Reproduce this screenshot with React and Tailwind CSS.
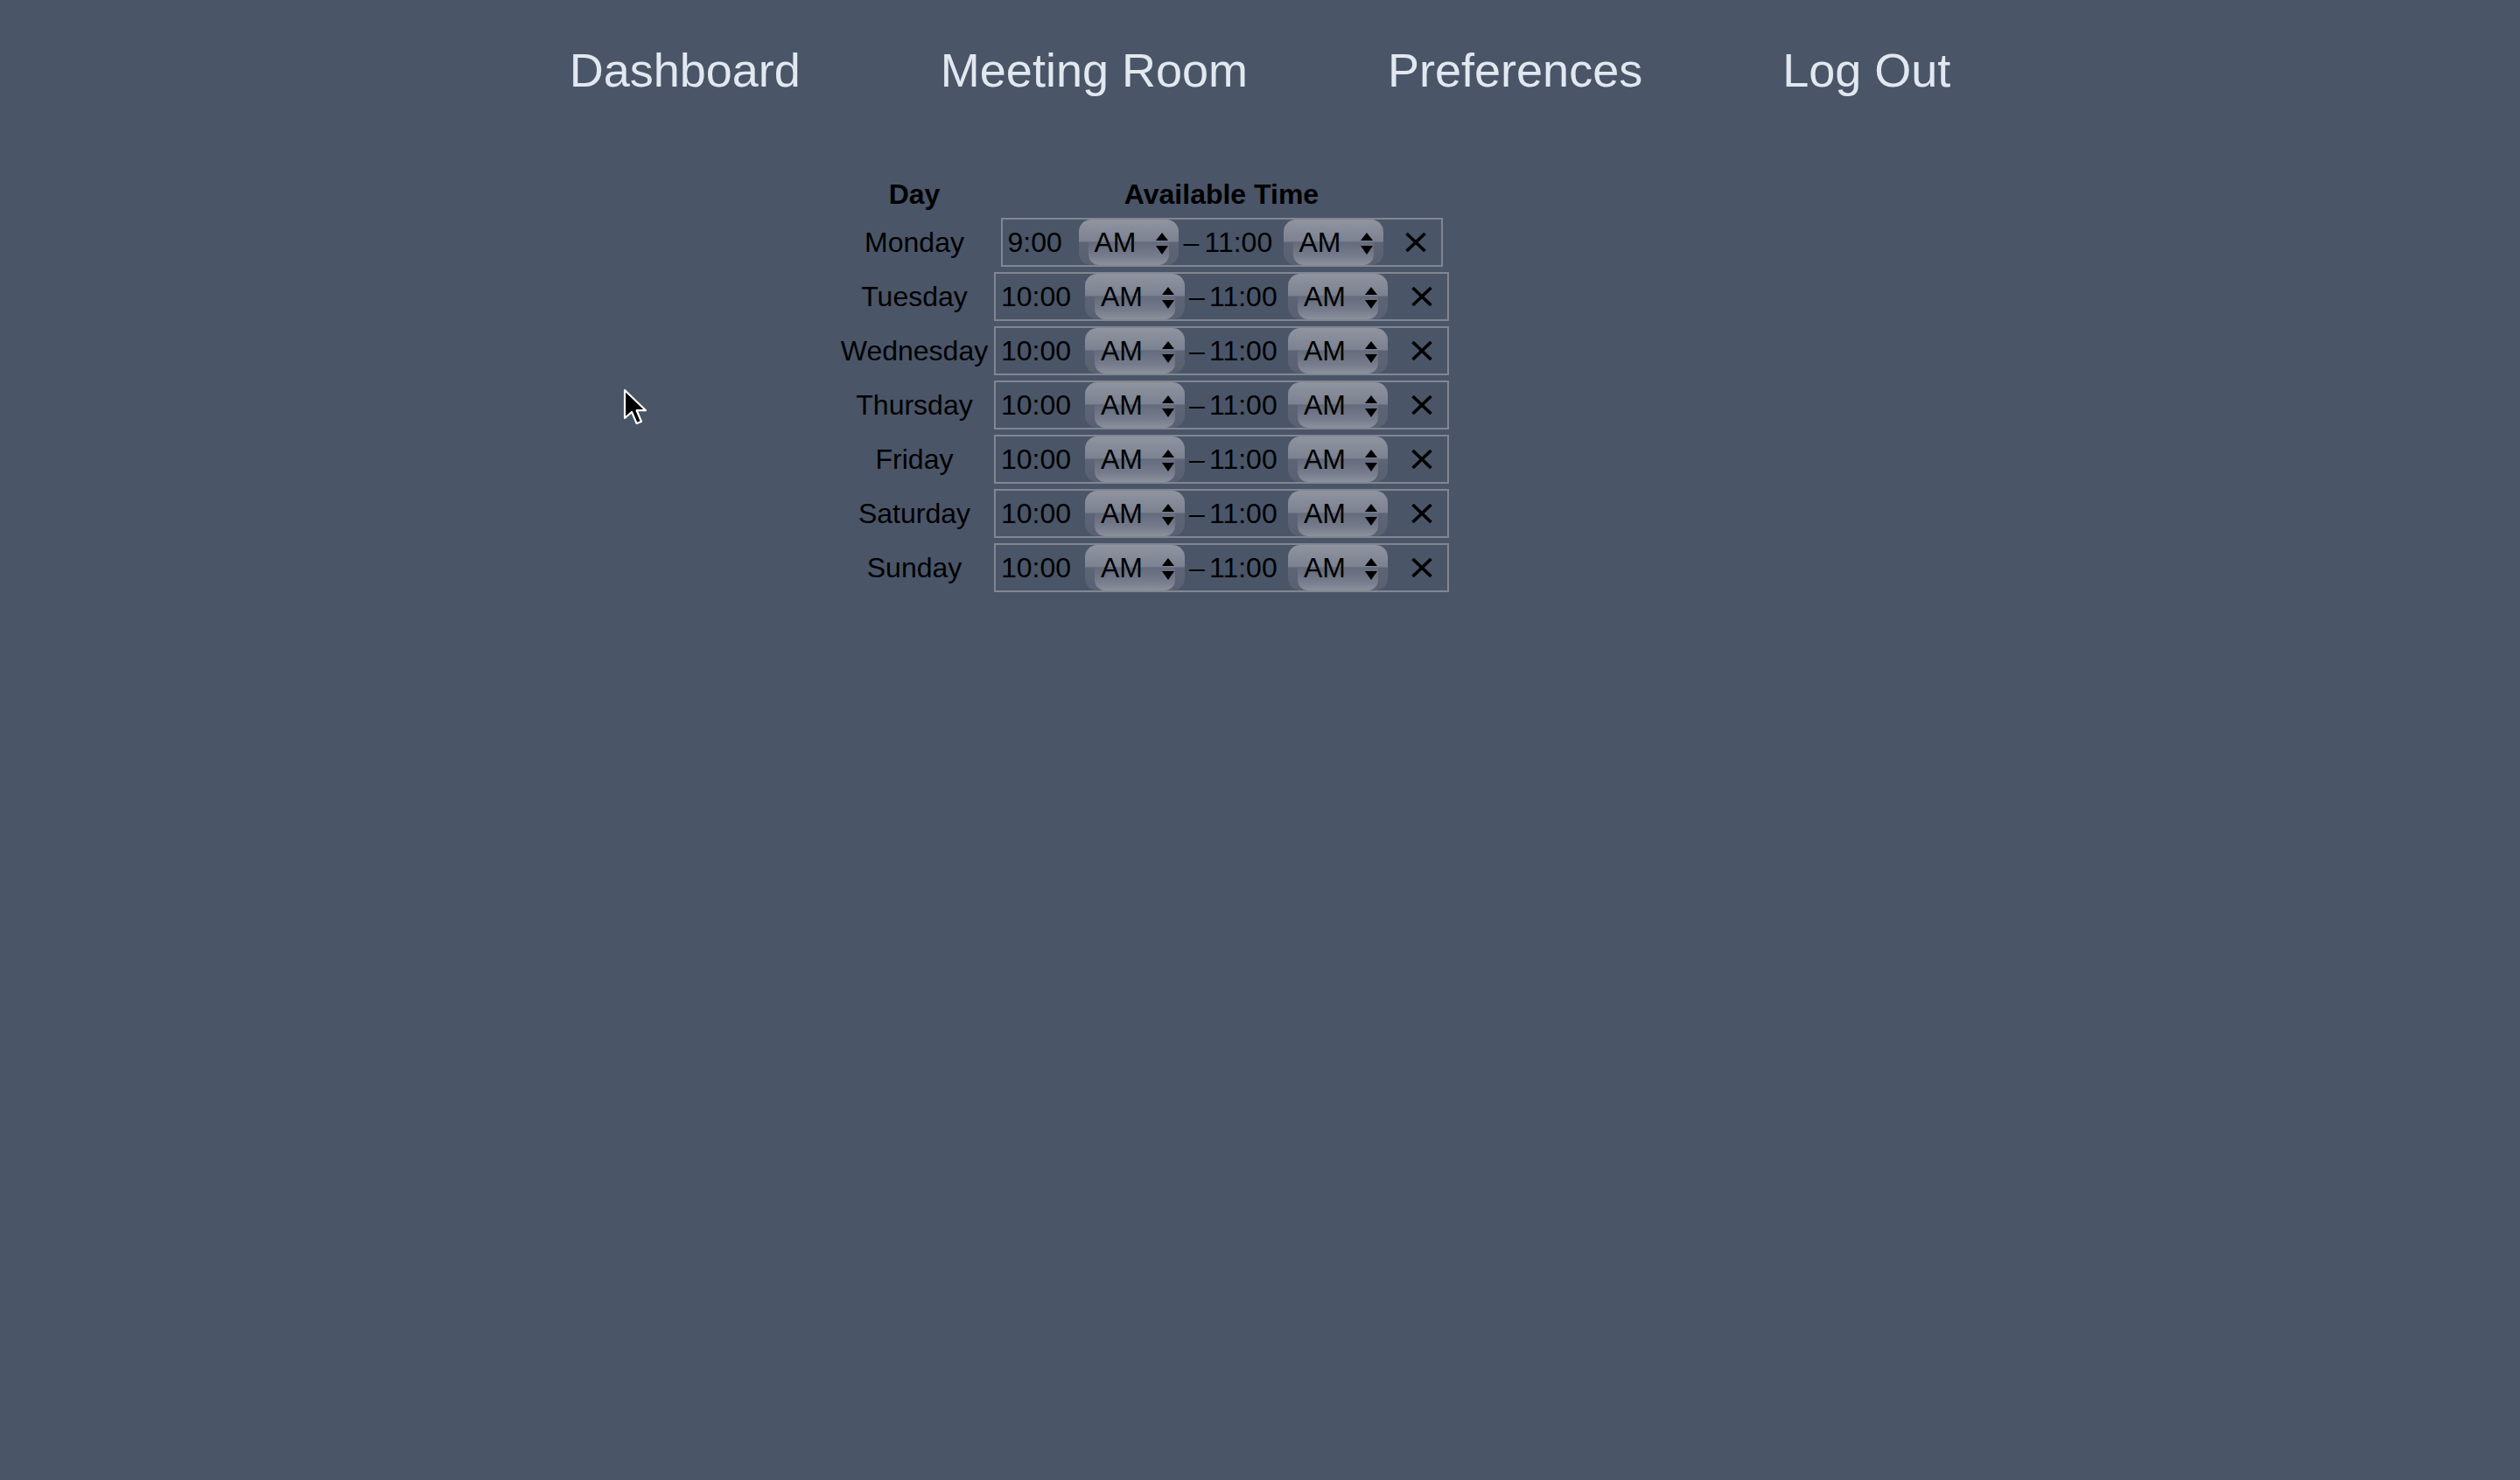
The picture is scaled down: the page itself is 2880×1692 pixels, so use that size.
import React from "react";

const rows = [
  ["Monday", "9:00"],
  ["Tuesday", "10:00"],
  ["Wednesday", "10:00"],
  ["Thursday", "10:00"],
  ["Friday", "10:00"],
  ["Saturday", "10:00"],
  ["Sunday", "10:00"],
];

function Arrows() {
  return (
    <svg width="14" height="26" viewBox="0 0 14 26" className="mt-[3px] shrink-0">
      <polygon points="7,0 14,9 0,9" fill="#000" />
      <polygon points="0,15 14,15 7,25" fill="#000" />
    </svg>
  );
}

function Select() {
  return (
    <div className="relative flex h-[52px] w-[114px] shrink-0 items-center pl-[18px] pr-[12px]">
      <div className="absolute inset-0 rounded-[14px] bg-[linear-gradient(to_bottom,#8f949f_0%,#7c8291_48%,#5d6475_50%,#596072_100%)]" />
      <div className="absolute left-[11px] right-[11px] top-1/2 bottom-0 rounded-b-[12px] bg-[linear-gradient(to_bottom,#646b7c_0%,#767c8c_60%,#8b909c_100%)]" />
      <span className="relative">AM</span>
      <span className="relative ml-auto flex">
        <Arrows />
      </span>
    </div>
  );
}

function XIcon() {
  return (
    <svg width="24" height="22" viewBox="0 0 24 22" className="shrink-0">
      <line x1="1.5" y1="1" x2="22.5" y2="21" stroke="#000" strokeWidth="3.6" />
      <line x1="22.5" y1="1" x2="1.5" y2="21" stroke="#000" strokeWidth="3.6" />
    </svg>
  );
}

function TimeRange({ start }) {
  const short = start.length === 4;
  return (
    <div className="flex h-[56px] items-center border-2 border-[#828691] pl-[6px] leading-[52px]">
      <div className={short ? "w-[81px] shrink-0" : "w-[96px] shrink-0"}>{start}</div>
      <Select />
      <div className={short ? "w-[30px] shrink-0 text-center" : "w-[28px] shrink-0 text-center"}>–</div>
      <div className="w-[90px] shrink-0">11:00</div>
      <Select />
      <div className={short ? "flex w-[66px] shrink-0 items-center pl-[25px]" : "flex w-[68px] shrink-0 items-center pl-[27px]"}>
        <XIcon />
      </div>
    </div>
  );
}

export default function App() {
  return (
    <div className="relative min-h-[1692px] w-full bg-[#4a5568] font-['Liberation_Sans',Arial,sans-serif]">
      <nav className="flex justify-center gap-[160px] pt-[48px] text-[54px] leading-[64px] text-[#e2e8f0]">
        <span>Dashboard</span>
        <span>Meeting Room</span>
        <span>Preferences</span>
        <span>Log Out</span>
      </nav>

      <div className="ml-[956px] mt-[86px] text-[32px] text-black">
        <div className="grid h-[48px] grid-cols-[178px_524px] items-center font-bold leading-[48px]">
          <div className="text-center">Day</div>
          <div className="text-center">Available Time</div>
        </div>
        {rows.map(([day, start]) => (
          <div key={day} className="grid h-[62px] grid-cols-[178px_524px] items-center">
            <div className="text-center leading-[62px]">{day}</div>
            <div className="flex justify-center">
              <TimeRange start={start} />
            </div>
          </div>
        ))}
      </div>

      <svg
        className="absolute left-[712px] top-[444px]"
        width="28"
        height="42"
        viewBox="-2 -2 28 42"
      >
        <path
          d="M0 0 L0 32 L8 25 L13.6 38 L19 36 L13.6 23.2 L24 23.2 Z"
          fill="#000"
          stroke="#fff"
          strokeWidth="2.2"
          strokeLinejoin="round"
        />
      </svg>
    </div>
  );
}
